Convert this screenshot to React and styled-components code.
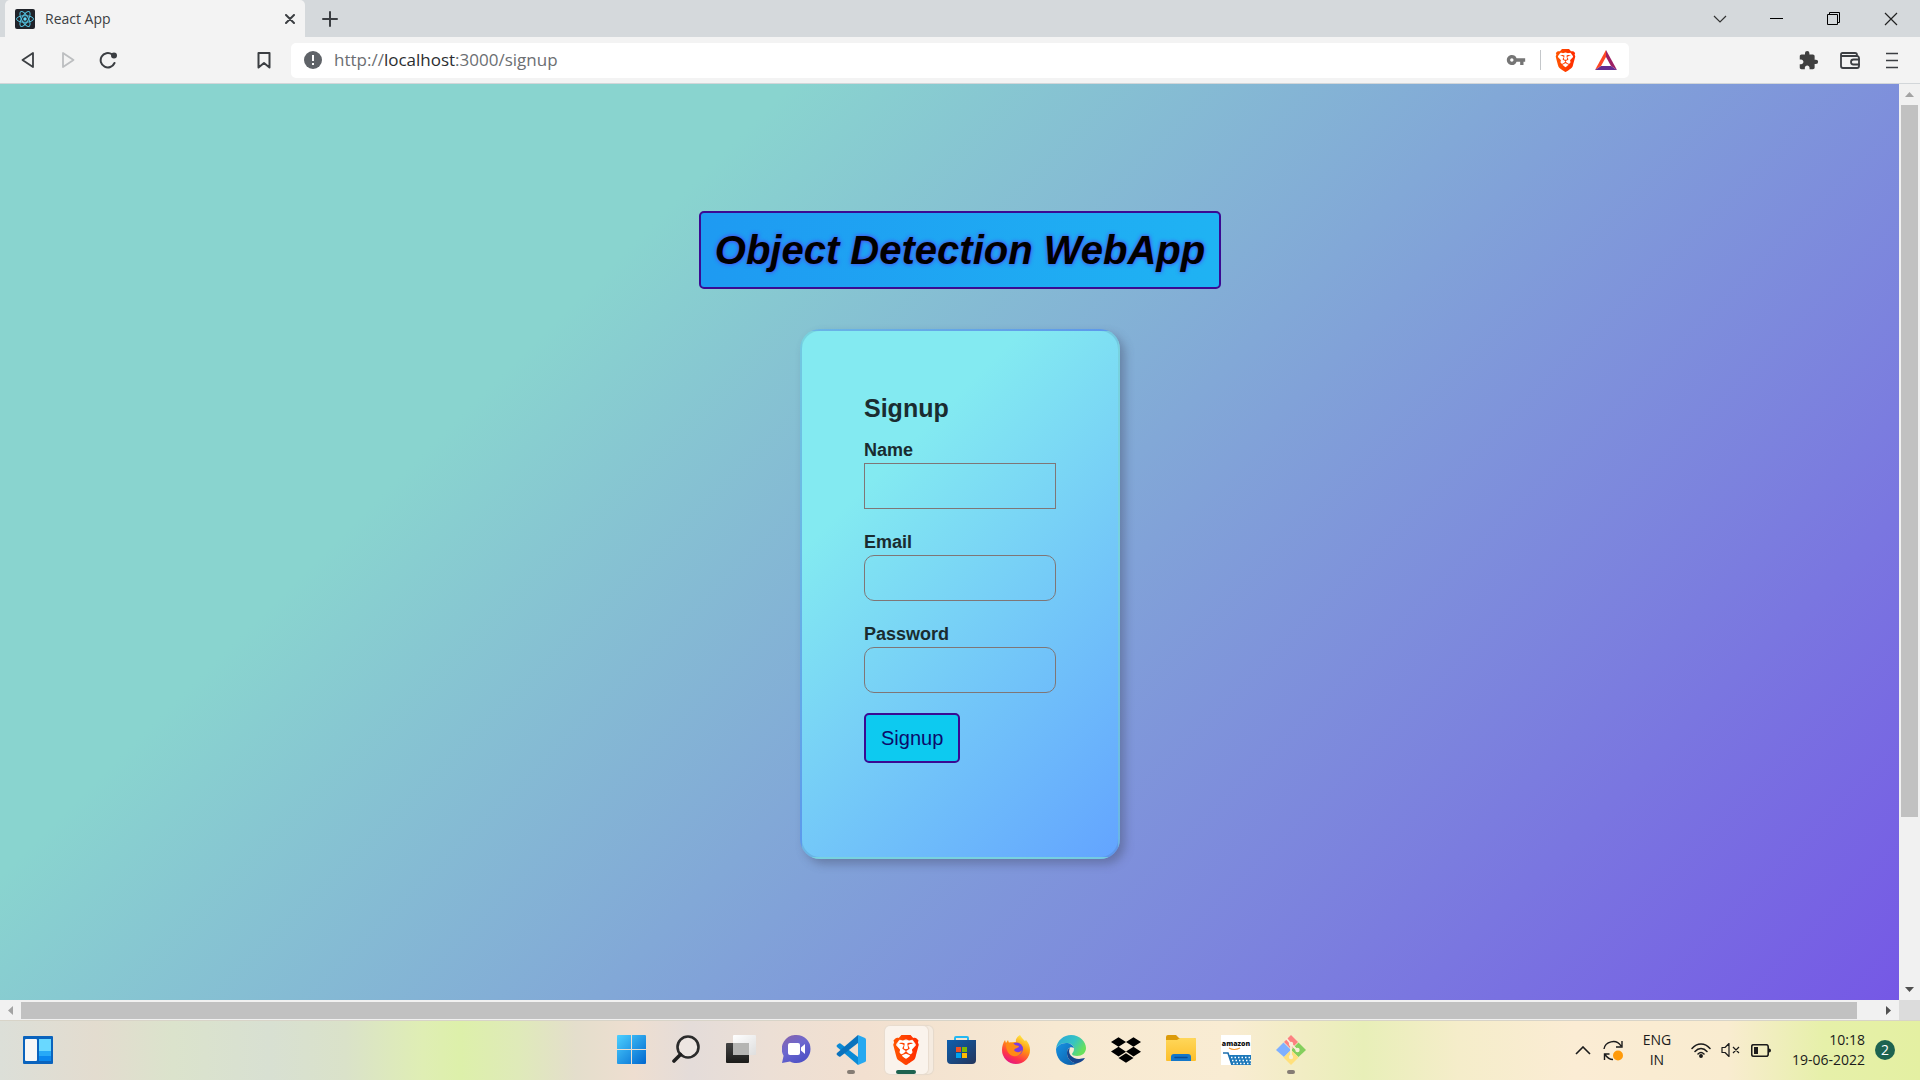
import React from "react";
import styled, { createGlobalStyle } from "styled-components";
import { MdVpnKey, MdExtension } from "react-icons/md";
import { SiBrave } from "react-icons/si";
import { FaDropbox } from "react-icons/fa";

const ui = `"Open Sans", "Noto Sans", sans-serif`;
const page = `"Liberation Sans", Arial, sans-serif`;

const GlobalStyle = createGlobalStyle`
  *, *::before, *::after { box-sizing: border-box; }
  body { margin: 0; font-family: ${ui}; }
  button { font: inherit; color: inherit; background: none; border: 0; padding: 0; }
  svg { display: block; }
`;

const Screen = styled.div`
  display: flex;
  flex-direction: column;
  height: 100vh;
  overflow: hidden;
`;

/* ---------- tab strip ---------- */

const TabStrip = styled.header`
  display: flex;
  height: 37px;
  padding: 0 1px 0 5px;
  background: #d5d9dc;
`;

const Tab = styled.div`
  display: flex;
  align-items: center;
  width: 300px;
  padding: 0 5px 0 10px;
  gap: 10px;
  border-radius: 5px 5px 0 0;
  background: #f3f3f3;
  color: #3b3e42;
  font-size: 14px;
`;

const TabTitle = styled.span`
  flex: 1;
`;

const IconButton = styled.button`
  display: flex;
  align-items: center;
  justify-content: center;
  width: ${(p) => p.$w || 40}px;
  height: 37px;
  color: ${(p) => p.$color || "#3b3e42"};
`;

const WindowControls = styled.div`
  display: flex;
  margin-left: auto;
`;

/* ---------- toolbar ---------- */

const Toolbar = styled.nav`
  display: grid;
  grid-template-columns: 291px 1fr 291px;
  align-items: center;
  height: 47px;
  background: #f3f3f3;
  border-bottom: 1px solid #d2d6d9;
`;

const NavGroup = styled.div`
  display: flex;
  padding: 0 7px 0 8px;
`;

const PushRight = styled.div`
  display: flex;
  margin-left: auto;
`;

const AddressBar = styled.div`
  display: flex;
  align-items: center;
  height: 35px;
  padding: 0 2px 0 13px;
  border-radius: 5px;
  background: #fff;
`;

const Address = styled.div`
  flex: 1;
  margin-left: 12px;
  color: #6b6e72;
  font-size: 17px;
  line-height: 24px;
  outline: none;
  white-space: nowrap;
`;

const Host = styled.span`
  color: #2b2d30;
`;

const Divider = styled.span`
  width: 1px;
  height: 20px;
  margin: 0 4px;
  background: #c4c7ca;
`;

/* ---------- viewport and scroll bars ---------- */

const Viewport = styled.div`
  flex: 1;
  min-height: 0;
  display: grid;
  grid-template: minmax(0, 1fr) 20px / minmax(0, 1fr) 21px;
`;

const PageBody = styled.main`
  display: flex;
  flex-direction: column;
  align-items: center;
  gap: 40px;
  padding: 127px 0 0 21px;
  overflow: hidden;
  font-family: ${page};
  background: linear-gradient(315deg, #734ae8 0%, #89d4cf 74%) 0 0 /
    calc(100% + 22px) calc(100% + 208px) no-repeat;
`;

const ScrollTrack = styled.div`
  display: flex;
  flex-direction: ${(p) => (p.$vertical ? "column" : "row")};
  padding: ${(p) => (p.$vertical ? "0 2px" : "2px 0 1px")};
  background: #f1f1f1;
`;

const ScrollThumb = styled.div`
  flex: ${(p) => p.$size};
  background: #c1c1c1;
`;

const ScrollSpace = styled.div`
  flex: ${(p) => p.$size};
`;

const ScrollArrow = styled.button`
  display: flex;
  align-items: center;
  justify-content: center;
  flex: 0 0 21px;
  color: ${(p) => (p.$dim ? "#a3a3a3" : "#505050")};
`;

const Corner = styled.div`
  background: #dcdcdc;
`;

/* ---------- page content ---------- */

const Title = styled.h1`
  margin: 0;
  padding: 10px 14px;
  border: 2px solid #3a0a93;
  border-radius: 5px;
  background: linear-gradient(90deg, #1e9af2, #1fb3f3);
  color: #000;
  font-size: 40px;
  font-style: italic;
  font-weight: 700;
  line-height: 54px;
  text-shadow: 0 0 4px #5a2df0;
`;

const Card = styled.form`
  width: 320px;
  min-height: 530px;
  padding: 62px;
  border: 2px solid rgba(60, 90, 130, 0.16);
  border-radius: 20px;
  background: linear-gradient(315deg, #63a4ff 0%, #83eaf1 74%);
  box-shadow: 5px 5px 10px rgba(70, 80, 110, 0.45);
  color: #1a2c30;
`;

const CardTitle = styled.h2`
  margin: 0 0 14px;
  font-size: 25px;
  line-height: 30px;
`;

const Field = styled.div`
  display: flex;
  flex-direction: column;
  margin-bottom: 20px;
`;

const Label = styled.label`
  font-size: 18px;
  font-weight: 700;
  line-height: 26px;
`;

const Input = styled.input`
  width: 100%;
  height: 46px;
  padding: 0 10px;
  border: 1px solid #7f7676;
  border-radius: ${(p) => p.$radius || 0}px;
  background: transparent;
  font: 18px ${page};
  outline: none;
`;

const Submit = styled.button`
  height: 50px;
  padding: 0 15px;
  border: 2px solid #3a0a93;
  border-radius: 5px;
  background: #0dcaf0;
  color: #0b0b6b;
  font-size: 20px;
`;

/* ---------- taskbar ---------- */

const Taskbar = styled.footer`
  display: grid;
  grid-template-columns: 1fr auto 1fr;
  align-items: center;
  height: 60px;
  box-shadow: inset 0 1px #d8d4c8;
  color: #1b1b1b;
  background: linear-gradient(
    90deg,
    #dcdfd8 0%, #e3dccf 5%, #dbe3cc 9%, #d8e0d2 14%, #dae2c9 18%,
    #dfeeb4 22%, #ddf0aa 24%, #dfeab9 27%, #e4decc 30%, #eeded0 33%,
    #e4dcd9 36%, #ecdfd5 40%, #f2e0d0 45%, #f7e9d2 55%, #f9ecd3 64%,
    #f1edc3 68%, #e8efb8 71%, #f5edca 76%, #fbecd4 82%, #f9ecd0 90%,
    #e6f0a9 95%, #e4f0a2 100%
  );
`;

const WidgetButton = styled(IconButton)`
  margin-left: 18px;
`;

const Dock = styled.div`
  display: flex;
  padding-left: 2px;
`;

const DockSlot = styled.button`
  display: flex;
  flex-direction: column;
  align-items: center;
  width: 55px;
  height: 48px;
  padding-top: 9px;
  gap: 5px;
`;

const ActivePlate = styled.button`
  display: flex;
  flex-direction: column;
  align-items: center;
  width: 43px;
  height: 48px;
  margin: 0 6px;
  padding-top: 9px;
  gap: 5px;
  border-radius: 5px;
  background: #faf3ec;
  box-shadow: 0 0 1px 1px #e8dccf, 5px 0 0 #f5ebe0, 5px 0 1px 1px #e5d9cb;
`;

const Running = styled.span`
  width: ${(p) => (p.$active ? 20 : 8)}px;
  height: 4px;
  border-radius: 2px;
  background: ${(p) => (p.$active ? "#1d6350" : "#857c74")};
`;

const Tray = styled.div`
  display: flex;
  align-items: center;
  justify-content: flex-end;
  padding-right: 25px;
  font-size: 14px;
  line-height: 20px;
`;

const Lang = styled.button`
  width: 58px;
  text-align: center;
`;

const Clock = styled.time`
  margin: 0 10px 0 16px;
  text-align: right;
`;

const Badge = styled.span`
  display: flex;
  align-items: center;
  justify-content: center;
  width: 20px;
  height: 20px;
  border-radius: 50%;
  background: #1d6350;
  color: #fff;
  font-size: 14px;
`;

/* ---------- icons ---------- */

const Svg = ({ w = 30, h = w, box, children, ...rest }) => (
  <svg width={w} height={h} viewBox={box || `0 0 ${w} ${h}`} fill="none" aria-hidden="true" {...rest}>
    {children}
  </svg>
);

const Stroke = (props) => (
  <Svg stroke="currentColor" strokeWidth="2" strokeLinecap="round" strokeLinejoin="round" {...props} />
);

const ReactLogo = () => (
  <Svg w={20}>
    <rect width="20" height="20" rx="2" fill="#20232a" />
    <g stroke="#53c1de" strokeWidth="1">
      {[0, 60, 120].map((a) => (
        <ellipse key={a} cx="10" cy="10" rx="8.5" ry="3.3" transform={`rotate(${a} 10 10)`} />
      ))}
    </g>
    <circle cx="10" cy="10" r="1.7" fill="#61dafb" />
  </Svg>
);

const RewardsTriangle = () => (
  <Svg w={22} h={20}>
    <path d="M11 0L0 20l6-4 5-9z" fill="#ff4724" />
    <path d="M11 0l11 20-6-4-5-9z" fill="#9e1f63" />
    <path d="M0 20h22l-6-4H6z" fill="#662d91" />
  </Svg>
);

const Wallet = () => (
  <Stroke w={20} h={17} strokeWidth="1.8">
    <path d="M1 3v11a2 2 0 0 0 2 2h14a2 2 0 0 0 2-2V6a2 2 0 0 0-2-2H2.500C0.500 4 0.500 1 2.500 1H15a2 2 0 0 1 2 2" />
    <path d="M19 7.500h-5.500a2.500 2.500 0 0 0 0 5H19" />
  </Stroke>
);

const WindowsLogo = () => (
  <Svg w={29}>
    <defs>
      <linearGradient id="win" x1="0" y1="0" x2="1" y2="1">
        <stop stopColor="#4cd0ff" />
        <stop offset="1" stopColor="#0067cf" />
      </linearGradient>
    </defs>
    <path d="M0 1q0-1 1-1h13v14H0zM15 0h13q1 0 1 1v13H15zM0 15h14v14H1q-1 0-1-1zM15 15h14v13q0 1-1 1H15z" fill="url(#win)" />
  </Svg>
);

const SearchGlyph = () => (
  <Svg w={28} h={29}>
    <circle cx="16" cy="12" r="10.500" stroke="#2b2b2b" strokeWidth="2.600" fill="#f5f0ec" fillOpacity=".5" />
    <path d="M8.500 19.500L2 26" stroke="#1e1e1e" strokeWidth="3.600" strokeLinecap="round" />
  </Svg>
);

const TaskView = () => (
  <Svg w={30} h={29}>
    <defs>
      <linearGradient id="tvd" x2="0" y2="1">
        <stop stopColor="#444" />
        <stop offset="1" stopColor="#1b1b19" />
      </linearGradient>
      <linearGradient id="tvl" x2="1" y2="1">
        <stop stopColor="#fff" />
        <stop offset="1" stopColor="#dedede" />
      </linearGradient>
    </defs>
    <rect y="8" width="23" height="20" rx="1" fill="url(#tvd)" />
    <rect x="7" width="23" height="20" rx="1" fill="url(#tvl)" />
    <rect x="7" y="8" width="16" height="12" fill="#b5b5b3" />
  </Svg>
);

const Chat = () => (
  <Svg w={29}>
    <defs>
      <linearGradient id="chat" x1="0" y1="0" x2=".6" y2="1">
        <stop stopColor="#8a63a8" />
        <stop offset=".5" stopColor="#6d68cf" />
        <stop offset="1" stopColor="#4f52c6" />
      </linearGradient>
    </defs>
    <path d="M14.500 0a14 14 0 0 1 0 28c-2.500 0-4.500-.6-6.500-1.600L0 28l1.600-7.200A14 14 0 0 1 14.500 0z" fill="url(#chat)" />
    <rect x="6" y="8" width="12" height="12" rx="2" fill="#fff" />
    <path d="M19 12.500l4-3.500v10l-4-3.500z" fill="#fff" />
  </Svg>
);

const VsCode = () => (
  <Svg w={30}>
    <path d="M1 10l2-1.500q.7-.5 1.500 0L22 22v8L1 12q-1-1 0-2z" fill="#0a8ad6" />
    <path d="M1 20l2 1.500q.7.500 1.500 0L22 8V0L1 18q-1 1 0 2z" fill="#0a72bd" />
    <path d="M22 0l7 3q1 .5 1 1.500v21q0 1-1 1.500l-7 3z" fill="#26a8f0" />
  </Svg>
);

const BraveMark = ({ size }) => (
  <Svg w={size} h={size} box="0 0 30 30">
    <defs>
      <linearGradient id="brave" x2="1" y2="0">
        <stop stopColor="#ff5601" />
        <stop offset="1" stopColor="#ff2a00" />
      </linearGradient>
    </defs>
    <path d="M8 6h14l2 6-3 9-6 5-6-5-3-9z" fill="#fff" />
    <SiBrave x="0" y="0" size={30} fill="url(#brave)" />
  </Svg>
);

const Store = () => (
  <Svg w={29} h={30}>
    <defs>
      <linearGradient id="store" x2="1" y2="1">
        <stop stopColor="#0d5fae" />
        <stop offset="1" stopColor="#24355c" />
      </linearGradient>
    </defs>
    <path d="M8 7V3q0-1 1-1h11q1 0 1 1v4" stroke="#24b8f2" strokeWidth="2" />
    <path d="M0 5h29v20q0 4-4 4H4q-4 0-4-4z" fill="url(#store)" />
    <path d="M9 12h5v5H9z" fill="#f25022" />
    <path d="M15 12h5v5h-5z" fill="#7fba00" />
    <path d="M9 18h5v5H9z" fill="#00a4ef" />
    <path d="M15 18h5v5h-5z" fill="#ffb900" />
  </Svg>
);

const Firefox = () => (
  <Svg w={28} h={29}>
    <defs>
      <linearGradient id="ff" x1=".8" y1="0" x2=".3" y2="1">
        <stop stopColor="#fff44f" />
        <stop offset=".4" stopColor="#ff980e" />
        <stop offset=".75" stopColor="#ff3647" />
        <stop offset="1" stopColor="#e31587" />
      </linearGradient>
    </defs>
    <path d="M18 0c2 3 3 4 5 6l1-1c3 3 4 7 4 10a14 14 0 0 1-28 0c0-4 1-7 3-10l1 3 2-3 1 3c2-1 5-1 7-1-1-3 2-6 4-7z" fill="url(#ff)" />
    <circle cx="14.500" cy="14" r="6.500" fill="#7a3be0" />
    <path d="M4 9c3-2 7-2 9 1l4 1c0 2-3 2-4 3-2 1 0 3 2 3 2 1 4-1 5-2-1 5-5 7-9 6-4-1-7-5-7-12z" fill="#ff8a16" />
  </Svg>
);

const Edge = () => (
  <Svg w={30}>
    <defs>
      <linearGradient id="edgeTop" x2="1" y2=".5">
        <stop stopColor="#2aa4dc" />
        <stop offset=".6" stopColor="#35c3c4" />
        <stop offset="1" stopColor="#67e05c" />
      </linearGradient>
      <linearGradient id="edgeLow" x2="1" y2="1">
        <stop stopColor="#1794e4" />
        <stop offset="1" stopColor="#0c59a4" />
      </linearGradient>
    </defs>
    <path d="M0 14C1 5 8 0 15 0c9 0 15 7 15 13 0 5-4 8-9 8-3 0-5-1-5-2s2-2 2-5c0-4-4-6-8-6-5 0-9 3-10 6z" fill="url(#edgeTop)" />
    <path d="M0 14c1-3 5-6 10-6 4 0 7 2 8 5-4-2-7 1-7 5 0 6 5 11 11 10-2 1-5 2-7 2C6 30 0 23 0 14z" fill="url(#edgeLow)" />
    <path d="M11 18c0-3 1-4 3-5-3 5 2 11 9 11 2 0 4-1 6-1-2 3-4 4-7 5-6 1-11-4-11-10z" fill="#15458f" />
  </Svg>
);

const Explorer = () => (
  <Svg w={30} h={28}>
    <defs>
      <linearGradient id="fold" x2="0" y2="1">
        <stop stopColor="#ffd75a" />
        <stop offset="1" stopColor="#fdbf2b" />
      </linearGradient>
    </defs>
    <path d="M0 2q0-2 2-2h8l3 3h15q2 0 2 2v5H0z" fill="#dc9b0a" />
    <path d="M0 5h11l3-2h14q2 0 2 1v21q0 1-1 1H1q-1 0-1-1z" fill="url(#fold)" />
    <path d="M5 26v-4q0-3 3-3h14q3 0 3 3v4z" fill="#1377c9" />
    <path d="M9 22.500h12" stroke="#0a4c93" strokeWidth="1.500" strokeLinecap="round" />
  </Svg>
);

const Amazon = () => (
  <Svg w={30}>
    <path d="M0 0h30v30H0z" fill="#fff" />
    <text x="15" y="11" textAnchor="middle" fontFamily="Open Sans" fontSize="7" fontWeight="800" fill="#111">amazon</text>
    <path d="M8 13q5 3 11 0" stroke="#f79b34" strokeWidth="1.200" />
    <path d="M2 18h5l4 12" stroke="#1c6fae" strokeWidth="1.600" />
    <path d="M8 20h22v10H11z" fill="#1c78ba" />
    <path d="M10 22.500h20M11 25.500h19M12 28.500h18" stroke="#fff" strokeWidth="1.400" strokeDasharray="1.500 2" />
  </Svg>
);

const GitLogo = () => (
  <Svg w={30}>
    <path d="M15 0l7 7-7 7-7-7z" fill="#fc8181" />
    <path d="M7.500 7.500L15 15l-7 7-8-7z" fill="#7fb0ff" />
    <path d="M22.500 7.500L30 15l-7.500 7-7.500-7z" fill="#84cf5d" />
    <path d="M15 15l7.500 7.500L15 30l-7.500-7.500z" fill="#ffe07c" />
    <path d="M10 3l5 6v13M15 9l6 6" stroke="#f8efd8" strokeWidth="1.800" />
    <g fill="#f8efd8">
      <circle cx="15" cy="9" r="2.200" />
      <circle cx="21.500" cy="15" r="2.200" />
      <circle cx="15" cy="22" r="2.200" />
    </g>
  </Svg>
);

const Widgets = () => (
  <Svg w={30} h={28}>
    <rect width="30" height="28" rx="1" fill="#0a63bd" />
    <rect x="2" y="3" width="12" height="22" rx="1" fill="#f7f7f7" />
    <path d="M16 3h12v12H16z" fill="#69d8ff" />
    <path d="M16 15h12v5H16z" fill="#27aaf7" />
    <path d="M16 20h12v5H16z" fill="#0b88ee" />
  </Svg>
);

const Sync = () => (
  <Svg w={20} h={21} stroke="#1b1b1b" strokeWidth="1.400">
    <path d="M1 9C2 2 13-2 18 6M19 1v6h-6" />
    <path d="M10 19.500c-4 0-6-2-8-5M1.500 20v-6h5" />
    <circle cx="15" cy="15.500" r="5" fill="#ff9a0a" stroke="none" />
  </Svg>
);

const Wifi = () => (
  <Svg w={20} h={15} stroke="#1b1b1b" strokeWidth="1.500" strokeLinecap="round">
    <path d="M1 5.500c5-6 13-6 18 0M4 8.500c3.500-4 8.500-4 12 0M7 11c2-2 4-2 6 0" />
    <circle cx="10" cy="13" r="1.200" fill="#1b1b1b" />
  </Svg>
);

const Muted = () => (
  <Svg w={20} h={14} stroke="#1b1b1b" strokeWidth="1.200" strokeLinejoin="round">
    <path d="M1 4.500h3l4-4v13l-4-4H1zM12 4l6 6M18 4l-6 6" />
  </Svg>
);

const Battery = () => (
  <Svg w={20} h={13}>
    <rect x=".7" y=".7" width="16.500" height="11.500" rx="2" stroke="#1b1b1b" strokeWidth="1.600" />
    <path d="M3 3h4v7H3zM18 4.500q2 0 2 2t-2 2z" fill="#1b1b1b" />
  </Svg>
);

/* ---------- app ---------- */

const dock = [
  { name: "Start", Icon: WindowsLogo },
  { name: "Search", Icon: SearchGlyph },
  { name: "Task View", Icon: TaskView },
  { name: "Chat", Icon: Chat },
  { name: "Visual Studio Code", Icon: VsCode, running: true },
  { name: "Brave", Icon: () => <BraveMark size={30} />, running: true, active: true },
  { name: "Microsoft Store", Icon: Store },
  { name: "Firefox", Icon: Firefox },
  { name: "Edge", Icon: Edge },
  { name: "Dropbox", Icon: () => <FaDropbox size={30} color="#000" /> },
  { name: "File Explorer", Icon: Explorer },
  { name: "Amazon", Icon: Amazon },
  { name: "Git", Icon: GitLogo, running: true },
];

const fields = [
  { id: "name", label: "Name", type: "text" },
  { id: "email", label: "Email", type: "email", radius: 10 },
  { id: "password", label: "Password", type: "password", radius: 10 },
];

const arrows = {
  up: "M0 5l4.500-5L9 5z",
  down: "M0 0h9L4.500 5z",
  left: "M5 0v9L0 4.500z",
  right: "M0 0l5 4.500L0 9z",
};

const Arrow = ({ dir, dim }) => {
  const tall = dir === "left" || dir === "right";
  return (
    <ScrollArrow type="button" aria-label={`Scroll ${dir}`} $dim={dim}>
      <Svg w={tall ? 5 : 9} h={tall ? 9 : 5}>
        <path d={arrows[dir]} fill="currentColor" />
      </Svg>
    </ScrollArrow>
  );
};

export default function App() {
  return (
    <Screen>
      <GlobalStyle />
      <TabStrip>
        <Tab>
          <ReactLogo />
          <TabTitle>React App</TabTitle>
          <IconButton aria-label="Close tab" $w={20}>
            <Stroke w={10}><path d="M1 1l8 8M9 1L1 9" /></Stroke>
          </IconButton>
        </Tab>
        <IconButton aria-label="New tab" $w={50}>
          <Stroke w={16}><path d="M8 1v14M1 8h14" /></Stroke>
        </IconButton>
        <WindowControls>
          <IconButton aria-label="Search tabs" $w={57}>
            <Svg w={14} h={8} stroke="#333" strokeWidth="1.200"><path d="M1 1l6 6 6-6" /></Svg>
          </IconButton>
          <IconButton aria-label="Minimise" $w={57}>
            <Svg w={13} h={1}><path d="M0 0h13v1H0z" fill="#000" /></Svg>
          </IconButton>
          <IconButton aria-label="Restore" $w={57}>
            <Svg w={13} stroke="#000"><path d="M.5 2.500h10v10H.5zM2.500 2.500v-2h10v10h-2" /></Svg>
          </IconButton>
          <IconButton aria-label="Close" $w={57}>
            <Svg w={14} stroke="#222" strokeWidth="1.200"><path d="M1 1l12 12M13 1L1 13" /></Svg>
          </IconButton>
        </WindowControls>
      </TabStrip>

      <Toolbar>
        <NavGroup>
          <IconButton aria-label="Back">
            <Stroke w={14} h={16} strokeWidth="1.800"><path d="M12 1v14L1.500 8z" /></Stroke>
          </IconButton>
          <IconButton aria-label="Forward" $color="#bcbec0">
            <Stroke w={14} h={16} strokeWidth="1.800"><path d="M2 1v14L12.500 8z" /></Stroke>
          </IconButton>
          <IconButton aria-label="Reload">
            <Stroke w={18} h={18}>
              <path d="M15.500 12A7.200 7.200 0 1 1 13 3.300" />
              <circle cx="15" cy="4.500" r="2" fill="currentColor" />
            </Stroke>
          </IconButton>
          <PushRight>
            <IconButton aria-label="Bookmark">
              <Stroke w={14} h={17}><path d="M1.500 1h11v14.500L7 11l-5.500 4.500z" /></Stroke>
            </IconButton>
          </PushRight>
        </NavGroup>
        <AddressBar>
          <Svg w={18}>
            <circle cx="9" cy="9" r="9" fill="#5f6368" />
            <path d="M8 4h2v6H8zM8 12h2v2H8z" fill="#fff" />
          </Svg>
          <Address role="textbox" aria-label="Address" contentEditable suppressContentEditableWarning spellCheck={false}>
            http://<Host>localhost</Host>:3000/signup
          </Address>
          <IconButton aria-label="Saved passwords" $color="#757575"><MdVpnKey size={20} /></IconButton>
          <Divider />
          <IconButton aria-label="Brave Shields"><BraveMark size={23} /></IconButton>
          <IconButton aria-label="Brave Rewards" $w={42}><RewardsTriangle /></IconButton>
        </AddressBar>
        <NavGroup>
          <PushRight>
            <IconButton aria-label="Extensions" $w={42} $color="#3f3f3f"><MdExtension size={21} /></IconButton>
            <IconButton aria-label="Wallet" $w={42}><Wallet /></IconButton>
            <IconButton aria-label="Menu" $w={42}>
              <Svg w={12} h={17} stroke="currentColor" strokeWidth="1.700"><path d="M0 1.500h12M0 8.500h12M0 15.500h12" /></Svg>
            </IconButton>
          </PushRight>
        </NavGroup>
      </Toolbar>

      <Viewport>
        <PageBody>
          <Title>Object Detection WebApp</Title>
          <Card onSubmit={(e) => e.preventDefault()}>
            <CardTitle>Signup</CardTitle>
            {fields.map((f) => (
              <Field key={f.id}>
                <Label htmlFor={f.id}>{f.label}</Label>
                <Input id={f.id} type={f.type} $radius={f.radius} />
              </Field>
            ))}
            <Submit type="submit">Signup</Submit>
          </Card>
        </PageBody>
        <ScrollTrack $vertical>
          <Arrow dir="up" dim />
          <ScrollThumb $size={712} />
          <ScrollSpace $size={162} />
          <Arrow dir="down" />
        </ScrollTrack>
        <ScrollTrack>
          <Arrow dir="left" dim />
          <ScrollThumb $size={1836} />
          <ScrollSpace $size={21} />
          <Arrow dir="right" />
        </ScrollTrack>
        <Corner />
      </Viewport>

      <Taskbar>
        <WidgetButton aria-label="Widgets"><Widgets /></WidgetButton>
        <Dock>
          {dock.map(({ name, Icon, running, active }) => {
            const Slot = active ? ActivePlate : DockSlot;
            return (
              <Slot key={name} aria-label={name}>
                <Icon />
                {running && <Running $active={active} />}
              </Slot>
            );
          })}
        </Dock>
        <Tray>
          <IconButton aria-label="Hidden icons" $w={30}>
            <Svg w={16} h={9} stroke="#1b1b1b" strokeWidth="1.600"><path d="M1 8l7-7 7 7" /></Svg>
          </IconButton>
          <IconButton aria-label="Updates" $w={30}><Sync /></IconButton>
          <Lang>ENG<br />IN</Lang>
          <IconButton aria-label="Wi-Fi" $w={30}><Wifi /></IconButton>
          <IconButton aria-label="Volume" $w={30}><Muted /></IconButton>
          <IconButton aria-label="Battery" $w={30}><Battery /></IconButton>
          <Clock>10:18<br />19-06-2022</Clock>
          <Badge>2</Badge>
        </Tray>
      </Taskbar>
    </Screen>
  );
}
